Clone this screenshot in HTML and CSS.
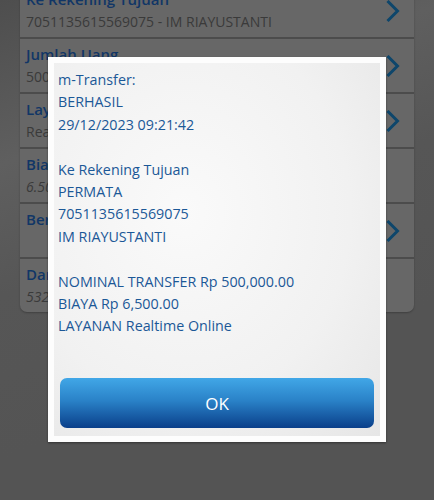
FILE: index.html
```html
<!DOCTYPE html>
<html>
<head>
<meta charset="utf-8">
<link rel="stylesheet" href="styles.css">
</head>
<body>
<div class="screen">
  <div class="list">
    <div class="row">
      <div class="texts"><div class="title">Ke Rekening Tujuan</div><div class="sub">7051135615569075 - IM RIAYUSTANTI</div></div>
      <svg class="chev" viewBox="0 0 14 24"><path d="M2 2 L12 12 L2 22" /></svg>
    </div>
    <div class="row">
      <div class="texts"><div class="title">Jumlah Uang</div><div class="sub">500,000.00</div></div>
      <svg class="chev" viewBox="0 0 14 24"><path d="M2 2 L12 12 L2 22" /></svg>
    </div>
    <div class="row">
      <div class="texts"><div class="title">Layanan Transfer</div><div class="sub">Realtime Online</div></div>
      <svg class="chev" viewBox="0 0 14 24"><path d="M2 2 L12 12 L2 22" /></svg>
    </div>
    <div class="row">
      <div class="texts"><div class="title">Biaya</div><div class="sub italic">6.500</div></div>
    </div>
    <div class="row">
      <div class="texts"><div class="title">Berita</div><div class="sub">&nbsp;</div></div>
      <svg class="chev" viewBox="0 0 14 24"><path d="M2 2 L12 12 L2 22" /></svg>
    </div>
    <div class="row last">
      <div class="texts"><div class="title">Dari Rekening</div><div class="sub italic">5321</div></div>
    </div>
  </div>

  <div class="dialog">
    <div class="panel">
      <div class="msg">
        <div>m-Transfer:</div>
        <div>BERHASIL</div>
        <div>29/12/2023 09:21:42</div>
        <div>&nbsp;</div>
        <div>Ke Rekening Tujuan</div>
        <div>PERMATA</div>
        <div>7051135615569075</div>
        <div>IM RIAYUSTANTI</div>
        <div>&nbsp;</div>
        <div>NOMINAL TRANSFER Rp 500,000.00</div>
        <div>BIAYA Rp 6,500.00</div>
        <div>LAYANAN Realtime Online</div>
      </div>
      <button class="ok">OK</button>
    </div>
  </div>
</div>
</body>
</html>
```

FILE: styles.css
```css
html, body {
  margin: 0;
  padding: 0;
}
body {
  width: 434px;
  height: 500px;
  background: #545454;
  font-family: "Open Sans", "Liberation Sans", sans-serif;
  overflow: hidden;
}
.screen {
  position: relative;
  width: 434px;
  height: 500px;
  overflow: hidden;
  background: linear-gradient(160deg, #4e4e4e 0%, #5f5f5f 25%, #565656 45%, #545454 70%);
}
.list {
  margin: -16px 20px 0 20px;
  background: #676767;
  border-radius: 0 0 7px 7px;
  box-shadow: 0 1px 2px rgba(0,0,0,0.25);
}
.row {
  height: 53px;
  border-bottom: 2px solid #4c4c4c;
  display: flex;
  align-items: center;
  justify-content: space-between;
  padding: 0 14px 0 6px;
}
.row.last {
  border-bottom: none;
}
.texts {
  display: flex;
  flex-direction: column;
  gap: 3px;
}
.title {
  color: #113666;
  font-size: 15px;
  font-weight: 600;
  line-height: 19px;
}
.sub {
  color: #3a3a3a;
  font-size: 14px;
  line-height: 19px;
}
.sub.italic {
  font-style: italic;
}
.chev {
  width: 15px;
  height: 24px;
  fill: none;
  stroke: #0e466b;
  stroke-width: 3;
}
.dialog {
  position: absolute;
  left: 48px;
  top: 57px;
  width: 338px;
  height: 385px;
  box-sizing: border-box;
  background: #fdfdfd;
  padding: 6px;
  box-shadow: 0 1px 2px rgba(0,0,0,0.4);
}
.panel {
  height: 100%;
  box-sizing: border-box;
  background: radial-gradient(ellipse at 40% 40%, #fafafa 0%, #f1f1f1 60%, #e6e6e6 100%);
  padding: 6px 6px 8px 4px;
  display: flex;
  flex-direction: column;
  justify-content: space-between;
}
.msg {
  color: #1b5897;
  font-size: 14.3px;
  line-height: 22.4px;
}
.ok {
  margin-left: 2px;
  height: 50px;
  border: none;
  border-radius: 7px;
  background: linear-gradient(180deg, #41a7e7 0%, #2a82c8 45%, #0a3f8a 100%);
  color: #ffffff;
  font-family: "Open Sans", "Liberation Sans", sans-serif;
  font-size: 17px;
  padding: 0;
}
```
